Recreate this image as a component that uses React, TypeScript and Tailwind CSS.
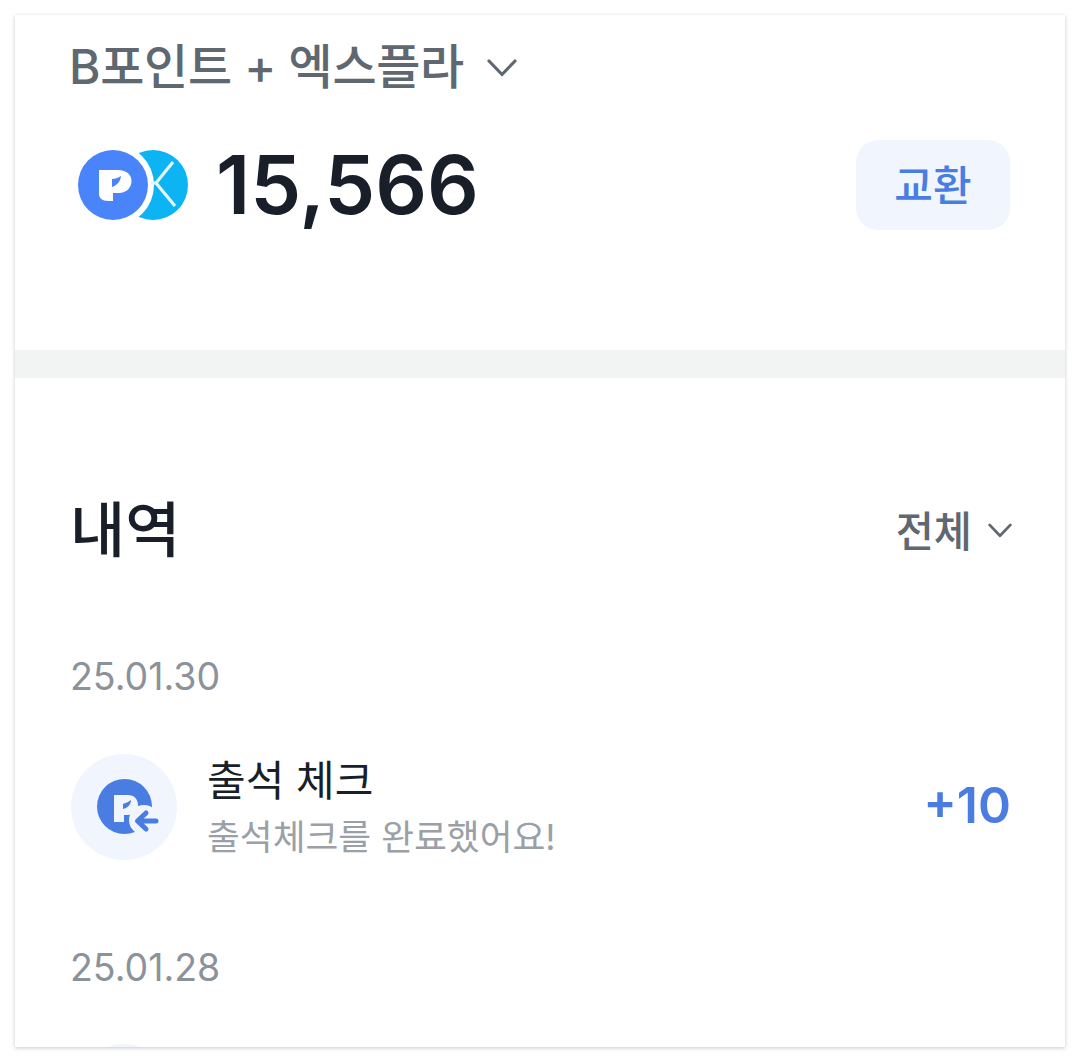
const font = "font-['Inter','Noto_Sans_CJK_KR',sans-serif]";

function Chevron({ width, height, stroke }: { width: number; height: number; stroke: number }) {
  return (
    <svg width={width} height={height} viewBox="0 0 30 18" fill="none" className="shrink-0">
      <path d="M2 2 L15 15.5 L28 2" stroke="#5f6871" strokeWidth={stroke} strokeLinecap="round" strokeLinejoin="round" />
    </svg>
  );
}

function PointLogo() {
  return (
    <svg width="116" height="76" viewBox="0 0 116 76" className="shrink-0">
      <circle cx="78" cy="38" r="35" fill="#0cb4f4" />
      <circle cx="38" cy="38" r="41" fill="#ffffff" />
      <path d="M98 15 L81 36 L100 59" fill="none" stroke="#e4f7ff" strokeWidth="3.2" />
      <path d="M76 36 H81" fill="none" stroke="#e4f7ff" strokeWidth="3.2" />
      <circle cx="38" cy="38" r="35" fill="#4a84fb" />
      <path
        fillRule="evenodd"
        d="M24 23 H43 C52 23 56.5 28 56.5 34 C56.5 41 51 46 44 46 H38 V54 H33 C27 54 24 51 24 47 Z M37 32 C40 32 43 31 46 29 C45.5 34 42.5 38 37 40 Z"
        fill="#ffffff"
      />
    </svg>
  );
}

function HistoryIcon() {
  return (
    <div className="flex h-[106px] w-[106px] shrink-0 items-center justify-center rounded-full bg-[#f0f5fe]">
      <svg width="69" height="56" viewBox="-7 0 69 56">
        <circle cx="27.5" cy="27.5" r="27.5" fill="#4a7de2" />
        <path
          fillRule="evenodd"
          d="M17 16 H31 C37 16 41 20 41 26 C41 32 37 36 31 36 H27 V43 H17 Z M26 25 C28 24 32 23 34 21 C34 25 31 29 26 30 Z"
          fill="#f0f5fe"
        />
        <circle cx="47" cy="41" r="15" fill="#f0f5fe" />
        <path
          d="M59 42 H41 M49 34 L40.5 42 L49 50"
          fill="none"
          stroke="#4a7de2"
          strokeWidth="5"
          strokeLinecap="round"
          strokeLinejoin="round"
        />
      </svg>
    </div>
  );
}

export default function App() {
  return (
    <div className={`${font} h-[1062px] w-[1080px] bg-white p-[15px]`}>
      <div className="flex h-[1032px] flex-col overflow-hidden bg-white shadow-[0_1px_4px_rgba(0,0,0,0.22)]">
        <section className="h-[335px] shrink-0 px-[55px]">
          <div className="flex h-[106px] items-center pb-[2px]">
            <span className="-ml-[1px] text-[48px] font-medium leading-none tracking-[-0.3px] text-[#5f6871]">
              B포인트 + 엑스플라
            </span>
            <span className="ml-[23px] mt-[2px]">
              <Chevron width={30} height={18} stroke={3.2} />
            </span>
          </div>
          <div className="flex items-center justify-between pt-[19px]">
            <div className="flex items-center">
              <div className="ml-[5px] mr-[25px] flex">
                <PointLogo />
              </div>
              <span className="text-[81px] font-semibold leading-none text-[#191f28]">15,566</span>
            </div>
            <button className="ml-[1px] flex h-[90px] w-[154px] items-center justify-center rounded-[22px] bg-[#f0f5fe] text-[42px] font-medium text-[#4a7de2]">
              교환
            </button>
          </div>
        </section>

        <div className="h-[28px] shrink-0 bg-[#f2f4f4]" />

        <section className="shrink-0 pl-[56px] pr-[54px]">
          <div className="flex items-center justify-between pt-[122px]">
            <span className="-ml-[1px] text-[60px] font-medium leading-none text-[#191f28]">내역</span>
            <div className="-mr-[1px] flex items-center gap-[16px] text-[#5f6871]">
              <span className="mt-[5px] text-[41.5px] font-medium leading-none">전체</span>
              <Chevron width={24} height={15} stroke={3.4} />
            </div>
          </div>

          <p className="-ml-[1px] mt-[98px] text-[37.5px] leading-none text-[#8b9299]">25.01.30</p>

          <div className="mt-[58px] flex items-center justify-between">
            <div className="flex items-center gap-[31px]">
              <HistoryIcon />
              <div className="-ml-[1px] mt-[3px] flex flex-col gap-[18px]">
                <span className="text-[42px] font-normal leading-none text-[#191f28]">출석 체크</span>
                <span className="text-[35.7px] font-normal leading-none text-[#9aa0a6]">출석체크를 완료했어요!</span>
              </div>
            </div>
            <span className="mb-[4px] text-[50px] font-semibold leading-none text-[#4a7de2]">+10</span>
          </div>

          <p className="-ml-[1px] mt-[89px] text-[37.5px] leading-none text-[#8b9299]">25.01.28</p>

          <div className="mt-[58px] h-[106px] w-[106px] rounded-full bg-[#f0f5fe]" />
        </section>
      </div>
    </div>
  );
}
